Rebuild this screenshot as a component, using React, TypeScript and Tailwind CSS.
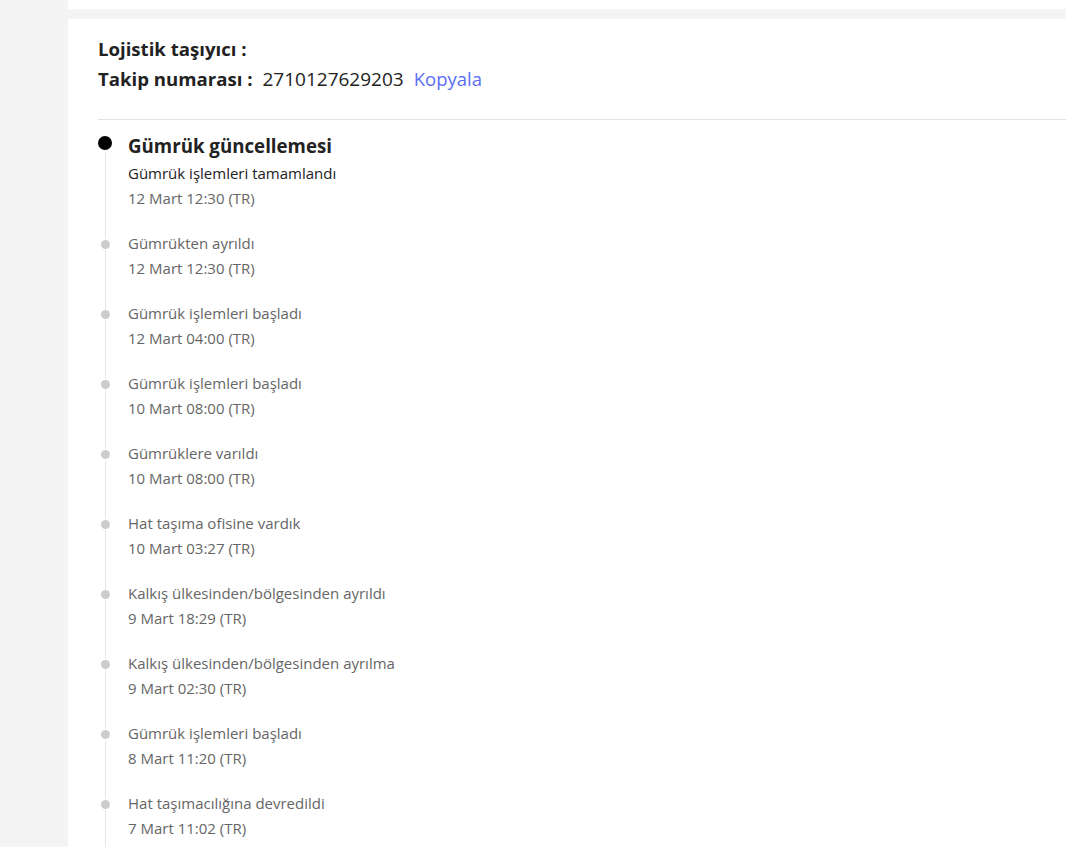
const events = [
  { text: 'Gümrükten ayrıldı', time: '12 Mart 12:30 (TR)' },
  { text: 'Gümrük işlemleri başladı', time: '12 Mart 04:00 (TR)' },
  { text: 'Gümrük işlemleri başladı', time: '10 Mart 08:00 (TR)' },
  { text: 'Gümrüklere varıldı', time: '10 Mart 08:00 (TR)' },
  { text: 'Hat taşıma ofisine vardık', time: '10 Mart 03:27 (TR)' },
  { text: 'Kalkış ülkesinden/bölgesinden ayrıldı', time: '9 Mart 18:29 (TR)' },
  { text: 'Kalkış ülkesinden/bölgesinden ayrılma', time: '9 Mart 02:30 (TR)' },
  { text: 'Gümrük işlemleri başladı', time: '8 Mart 11:20 (TR)' },
  { text: 'Hat taşımacılığına devredildi', time: '7 Mart 11:02 (TR)' },
];

export default function App() {
  return (
    <div className="flex min-h-screen bg-[#f4f4f4] font-['Open_Sans',sans-serif] text-[#222]">
      <div className="w-[68px] shrink-0" />
      <div className="flex flex-1 flex-col gap-[10px]">
        <div className="h-[9px] bg-white" />
        <div className="flex-1 bg-white pl-[30px] pt-[15px]">
          <div className="text-[19px] leading-[30px]">
            <div className="text-[18.6px] font-bold">Lojistik taşıyıcı :</div>
            <div className="flex items-center">
              <span className="text-[18.6px] font-bold">Takip numarası :</span>
              <span className="ml-[10px]">2710127629203</span>
              <button className="ml-[10px] text-[18.5px] text-[#5b6ef5]">Kopyala</button>
            </div>
          </div>
          <div className="mt-[25px] h-px bg-[#e2e2e2]" />

          <ul className="pt-[14px]">
            <li className="flex">
              <div className="flex w-[14px] shrink-0 flex-col items-center">
                <div className="h-[2px]" />
                <div className="h-[14px] w-[14px] rounded-full bg-black" />
                <div className="mt-[2px] w-px flex-1 bg-[#e6e6e6]" />
              </div>
              <div className="ml-[16px] pb-5">
                <div className="mb-[3px] text-[18.7px] font-bold leading-[24px]">Gümrük güncellemesi</div>
                <div className="text-[15px] leading-[25px] text-[#222]">Gümrük işlemleri tamamlandı</div>
                <div className="text-[15px] leading-[25px] text-[#666]">12 Mart 12:30 (TR)</div>
              </div>
            </li>
            {events.map((e, i) => (
              <li key={i} className="flex">
                <div className="flex w-[14px] shrink-0 flex-col items-center">
                  <div className="mb-[1px] h-[8px] w-px bg-[#e6e6e6]" />
                  <div className="h-[9px] w-[9px] rounded-full bg-[#cccccc]" />
                  <div className="mt-[1px] w-px flex-1 bg-[#e6e6e6]" />
                </div>
                <div className="ml-[16px] pb-5 text-[15px] leading-[25px] text-[#666]">
                  <div>{e.text}</div>
                  <div>{e.time}</div>
                </div>
              </li>
            ))}
          </ul>
        </div>
      </div>
    </div>
  );
}
